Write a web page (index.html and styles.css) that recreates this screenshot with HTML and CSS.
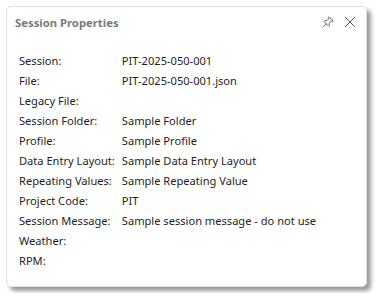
FILE: index.html
```html
<!DOCTYPE html>
<html lang="en">
<head>
    <meta charset="UTF-8">
    <title>Session Properties</title>
    <link rel="stylesheet" href="styles.css">
</head>
<body>
    <div class="panel">
        <div class="panel-header">
            <h1>Session Properties</h1>
            <div class="panel-actions">
                <svg class="icon" width="12" height="12" viewBox="0 0 12 12">
                    <path d="M7 0.8 L11.2 5 L10.4 5.8 L9.3 5.2 L7.2 7.3 L7.4 9.4 L6.6 10.2 L1.8 5.4 L2.6 4.6 L4.7 4.8 L6.8 2.7 L6.2 1.6 Z" fill="none" stroke="#555" stroke-width="0.9" stroke-linejoin="round"/>
                    <path d="M4.2 7.8 L0.8 11.2" stroke="#555" stroke-width="0.9"/>
                </svg>
                <svg class="icon" width="12" height="12" viewBox="0 0 12 12">
                    <path d="M1 1 L11 11 M11 1 L1 11" stroke="#555" stroke-width="1"/>
                </svg>
            </div>
        </div>
        <div class="props">
            <span>Session:</span><span>PIT-2025-050-001</span>
            <span>File:</span><span>PIT-2025-050-001.json</span>
            <span>Legacy File:</span><span></span>
            <span>Session Folder:</span><span>Sample Folder</span>
            <span>Profile:</span><span>Sample Profile</span>
            <span>Data Entry Layout:</span><span>Sample Data Entry Layout</span>
            <span>Repeating Values:</span><span>Sample Repeating Value</span>
            <span>Project Code:</span><span>PIT</span>
            <span>Session Message:</span><span>Sample session message - do not use</span>
            <span>Weather:</span><span></span>
            <span>RPM:</span><span></span>
        </div>
    </div>
</body>
</html>
```

FILE: styles.css
```css
* {
    margin: 0;
    padding: 0;
    box-sizing: border-box;
}

body {
    background: #fff;
    font-family: "Noto Sans", "Open Sans", sans-serif;
    color: #1e1e1e;
    padding: 6px;
}

.panel {
    width: 361px;
    height: 281px;
    background: #fff;
    border: 1px solid #e2e2e2;
    border-radius: 5px;
    box-shadow: 4px 4px 4px rgba(0, 0, 0, 0.4);
    padding: 0 10px 0 8px;
}

.panel-header {
    display: flex;
    align-items: center;
    justify-content: space-between;
    height: 30px;
}

.panel-header h1 {
    font-size: 11.3px;
    font-weight: 700;
    color: #7a7a7a;
}

.panel-actions {
    display: flex;
    gap: 10px;
    align-items: center;
}

.props {
    display: grid;
    grid-template-columns: auto 1fr;
    column-gap: 7px;
    padding: 14px 0 0 4px;
    font-size: 11.1px;
    line-height: 20px;
}
```
